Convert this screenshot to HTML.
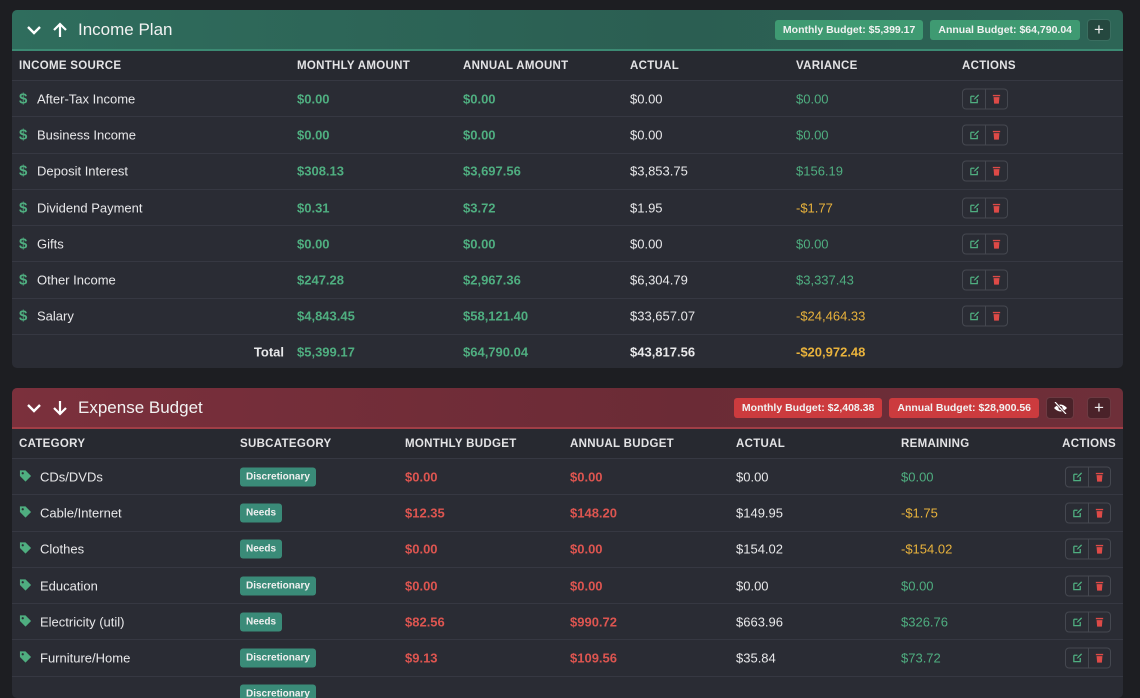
<!DOCTYPE html>
<html><head><meta charset="utf-8"><style>
*{box-sizing:border-box;margin:0;padding:0}
body{width:1140px;height:687px;overflow:hidden;background:#1d1e22;font-family:"Liberation Sans",sans-serif;color:#e8e8ea;font-size:13px;position:relative}
.card{position:absolute;left:12px;width:1111px;background:#2a2c34;border-radius:5px;overflow:hidden}
.hdr{height:41px;display:flex;align-items:center;padding:0 12px 0 14px;position:relative}
.inc .hdr{background:linear-gradient(90deg,#2f6d5d,#2b5e52 60%,#2d6556);border-bottom:2px solid #3c8a73}
.exp .hdr{background:linear-gradient(90deg,#7b303c,#6b2b36 60%,#6e2f39);border-bottom:2px solid #a03e46}
.title{font-size:17px;color:#f2f2f2;margin-left:10px}
.hdr svg{display:block}
.right{margin-left:auto;display:flex;align-items:center;gap:7px}
.pill{font-size:10.5px;font-weight:bold;color:#f2f2f2;padding:4px 8px;border-radius:3px}
.inc .pill{background:#3f9a72}
.exp .pill{background:#cc3b3e}
.sq{width:24px;height:22px;border-radius:4px;display:flex;align-items:center;justify-content:center;color:#eee;font-size:17px}
.inc .sq{background:#25483f;border:1px solid #3a6e60}
.exp .sq{background:#4a2229;border:1px solid #6d3a42}
.row{position:relative;height:36.3px;border-bottom:1px solid #363842}
.row>span{position:absolute;top:50%;transform:translateY(-50%);white-space:nowrap}
.th{height:30px;background:#272930}
.th>span{font-size:11.5px;font-weight:bold;letter-spacing:.3px;color:#e4e4e6}
.g{color:#4fae80;font-weight:bold}
.gl{color:#4fae80}
.r{color:#dd5550;font-weight:bold}
.o{color:#e8b23c}
.b{font-weight:bold}
.ic{color:#4fae80;font-size:15px;font-weight:bold}
.act{display:flex;border:1px solid #454850;border-radius:4px;height:21px}
.act i{width:22px;display:flex;align-items:center;justify-content:center}
.act i+i{border-left:1px solid #454850}
.tag{background:#3a8b78;color:#f0f0f0;font-size:10px;font-weight:bold;padding:4px 6px;border-radius:3px;line-height:11px}
</style></head><body>

<svg width="0" height="0" style="position:absolute"><defs>
<symbol id="ed" viewBox="0 0 12 12"><path d="M2 3h4M2 3v7h7V6" fill="none" stroke="#4fae80" stroke-width="1.4"/><path d="M5 7l1-2 4-4 1 1-4 4z" fill="#4fae80"/></symbol>
<symbol id="tr" viewBox="0 0 12 12"><rect x="2" y="1.5" width="8" height="1.5" fill="#dd4a47"/><path d="M2.8 4h6.4l-.6 7H3.4z" fill="#dd4a47"/></symbol>
<symbol id="tg" viewBox="0 0 14 14"><path d="M1 1h6l6 6-6 6-6-6z" fill="#4fae80"/><circle cx="4" cy="4" r="1.2" fill="#2a2c34"/></symbol>
</defs></svg>

<div class="card inc" style="top:10px;height:358px">
 <div class="hdr">
  <svg width="16" height="12" viewBox="0 0 16 12"><path d="M2 3l6 6 6-6" fill="none" stroke="#fff" stroke-width="2.4"/></svg>
  <svg width="16" height="16" viewBox="0 0 16 16" style="margin-left:10px"><path d="M8 15V2M2 8l6-6 6 6" fill="none" stroke="#fff" stroke-width="2.2"/></svg>
  <span class="title">Income Plan</span>
  <div class="right"><span class="pill">Monthly Budget: $5,399.17</span><span class="pill">Annual Budget: $64,790.04</span><span class="sq">+</span></div>
 </div>
 <div class="row th"><span style="left:7px">INCOME SOURCE</span><span style="left:285px">MONTHLY AMOUNT</span><span style="left:451px">ANNUAL AMOUNT</span><span style="left:618px">ACTUAL</span><span style="left:784px">VARIANCE</span><span style="left:950px">ACTIONS</span></div>
 <div id="incrows"></div>
</div>

<div class="card exp" style="top:388px;height:310px">
 <div class="hdr">
  <svg width="16" height="12" viewBox="0 0 16 12"><path d="M2 3l6 6 6-6" fill="none" stroke="#fff" stroke-width="2.4"/></svg>
  <svg width="16" height="16" viewBox="0 0 16 16" style="margin-left:10px"><path d="M8 1v13M2 8l6 6 6-6" fill="none" stroke="#fff" stroke-width="2.2"/></svg>
  <span class="title">Expense Budget</span>
  <div class="right"><span class="pill">Monthly Budget: $2,408.38</span><span class="pill">Annual Budget: $28,900.56</span>
  <span class="sq" style="width:28px"><svg width="15" height="12" viewBox="0 0 15 12"><path d="M1 6q6.5-7 13 0q-6.5 7-13 0z" fill="#fff"/><circle cx="7.5" cy="6" r="2" fill="#4a2229"/><path d="M2 0l11 12" stroke="#4a2229" stroke-width="2.4"/><path d="M2 0l11 12" stroke="#fff" stroke-width="1.2"/></svg></span>
  <span class="sq" style="margin-left:6px">+</span></div>
 </div>
 <div class="row th"><span style="left:7px">CATEGORY</span><span style="left:228px">SUBCATEGORY</span><span style="left:393px">MONTHLY BUDGET</span><span style="left:558px">ANNUAL BUDGET</span><span style="left:724px">ACTUAL</span><span style="left:889px">REMAINING</span><span style="right:7px">ACTIONS</span></div>
 <div id="exprows"></div>
</div>

<script>
var A='<span class="act"><i><svg width="11" height="11"><use href="#ed"/></svg></i><i><svg width="11" height="11"><use href="#tr"/></svg></i></span>';
var inc=[["After-Tax Income","$0.00","$0.00","$0.00","$0.00","gl"],["Business Income","$0.00","$0.00","$0.00","$0.00","gl"],["Deposit Interest","$308.13","$3,697.56","$3,853.75","$156.19","gl"],["Dividend Payment","$0.31","$3.72","$1.95","-$1.77","o"],["Gifts","$0.00","$0.00","$0.00","$0.00","gl"],["Other Income","$247.28","$2,967.36","$6,304.79","$3,337.43","gl"],["Salary","$4,843.45","$58,121.40","$33,657.07","-$24,464.33","o"]];
var h='';inc.forEach(function(r){h+='<div class="row"><span class="ic" style="left:7px">$</span><span style="left:25px">'+r[0]+'</span><span class="g" style="left:285px">'+r[1]+'</span><span class="g" style="left:451px">'+r[2]+'</span><span style="left:618px">'+r[3]+'</span><span class="'+r[5]+'" style="left:784px">'+r[4]+'</span><span style="left:950px">'+A+'</span></div>';});
h+='<div class="row" style="border:none;height:34px"><span class="b" style="right:839px">Total</span><span class="g" style="left:285px">$5,399.17</span><span class="g" style="left:451px">$64,790.04</span><span class="b" style="left:618px">$43,817.56</span><span class="o b" style="left:784px">-$20,972.48</span></div>';
document.getElementById('incrows').innerHTML=h;
var ex=[["CDs/DVDs","Discretionary","$0.00","$0.00","$0.00","$0.00","gl"],["Cable/Internet","Needs","$12.35","$148.20","$149.95","-$1.75","o"],["Clothes","Needs","$0.00","$0.00","$154.02","-$154.02","o"],["Education","Discretionary","$0.00","$0.00","$0.00","$0.00","gl"],["Electricity (util)","Needs","$82.56","$990.72","$663.96","$326.76","gl"],["Furniture/Home","Discretionary","$9.13","$109.56","$35.84","$73.72","gl"],["","Discretionary","","","","",""]];
h='';ex.forEach(function(r){h+='<div class="row">'+(r[0]?'<span style="left:7px;margin-top:-1px"><svg width="13" height="13" style="display:block"><use href="#tg"/></svg></span>':'')+'<span style="left:28px">'+r[0]+'</span><span class="tag" style="left:228px">'+r[1]+'</span><span class="r" style="left:393px">'+r[2]+'</span><span class="r" style="left:558px">'+r[3]+'</span><span style="left:724px">'+r[4]+'</span><span class="'+r[6]+'" style="left:889px">'+r[5]+'</span>'+(r[0]?'<span style="right:12px">'+A+'</span>':'')+'</div>';});
document.getElementById('exprows').innerHTML=h;
</script>
</body></html>
